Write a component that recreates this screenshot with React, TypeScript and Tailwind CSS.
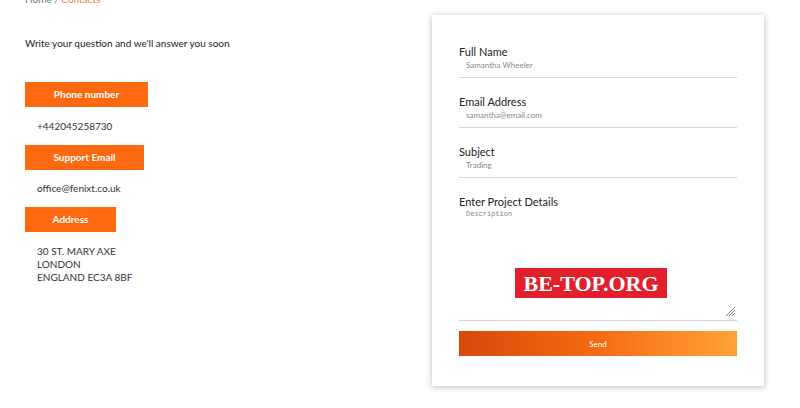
const fields = [
  { label: 'Full Name', value: 'Samantha Wheeler' },
  { label: 'Email Address', value: 'samantha@email.com' },
  { label: 'Subject', value: 'Trading' },
]

function Tag({ children, width }: { children: string; width: string }) {
  return (
    <div className={`flex h-[25px] items-center justify-center bg-[#ff6a10] text-[10px] font-bold text-white ${width}`}>
      {children}
    </div>
  )
}

export default function App() {
  return (
    <main className="relative h-[408px] w-[800px] overflow-hidden bg-white font-['Lato','Open_Sans',sans-serif] text-[#222]">
      <div className="flex pl-[25px]">
        <section className="w-[407px]">
          <div className="-mt-[7px] text-[10px] leading-[12px]">
            <span className="text-[#777]">Home / </span>
            <span className="text-[#f47c4a]">Contacts</span>
          </div>
          <p className="mt-[32px] text-[10px] leading-[12px] text-[#222]">Write your question and we'll answer you soon</p>

          <div className="mt-[33px]">
            <Tag width="w-[123px]">Phone number</Tag>
            <p className="py-[12px] pl-[12px] text-[10px] leading-[14px] text-[#333]">+442045258730</p>
            <Tag width="w-[119px]">Support Email</Tag>
            <p className="py-[11px] pl-[12px] text-[10px] leading-[15px] text-[#333]">office@fenixt.co.uk</p>
            <Tag width="w-[91px]">Address</Tag>
            <div className="mt-[13px] pl-[12px] text-[10px] leading-[13px] text-[#333]">
              <p>30 ST. MARY AXE</p>
              <p>LONDON</p>
              <p>ENGLAND EC3A 8BF</p>
            </div>
          </div>
        </section>

        <form className="relative mt-[15px] h-[371px] w-[332px] bg-white px-[27px] pt-[30px] shadow-[0_1px_6px_rgba(0,0,0,0.28)]">
          {fields.map((field) => (
            <div key={field.label} className="mb-[17px] border-b-[1.5px] border-[#d8d8d8] pb-[6px]">
              <div className="text-[11px] leading-[14px] text-[#222]">{field.label}</div>
              <div className="pl-[7px] text-[8px] leading-[12px] text-[#888]">{field.value}</div>
            </div>
          ))}

          <div className="relative h-[126px] border-b border-[#cfd8dc]">
            <div className="text-[11px] leading-[14px] text-[#222]">Enter Project Details</div>
            <div className="pl-[7px] font-['Liberation_Mono',monospace] text-[7px] leading-[10px] text-[#888]">Description</div>
            <svg className="absolute bottom-[3px] right-[1px]" width="11" height="11" viewBox="0 0 11 11">
              <path d="M10 1L1 10M10 4L4 10M10 7L7 10" stroke="#777" strokeWidth="1" />
            </svg>
          </div>

          <button
            type="button"
            className="mt-[10px] flex h-[25px] w-full items-center justify-center bg-gradient-to-r from-[#d9480a] via-[#f56a12] to-[#ffa236] text-[8px] text-white"
          >
            Send
          </button>

          <div className="absolute left-[83px] top-[253px] flex h-[30px] w-[152px] items-center justify-center bg-[#e2202c] font-['Liberation_Serif',serif] text-[22px] font-bold text-white">
            BE-TOP.ORG
          </div>
        </form>
      </div>
    </main>
  )
}
